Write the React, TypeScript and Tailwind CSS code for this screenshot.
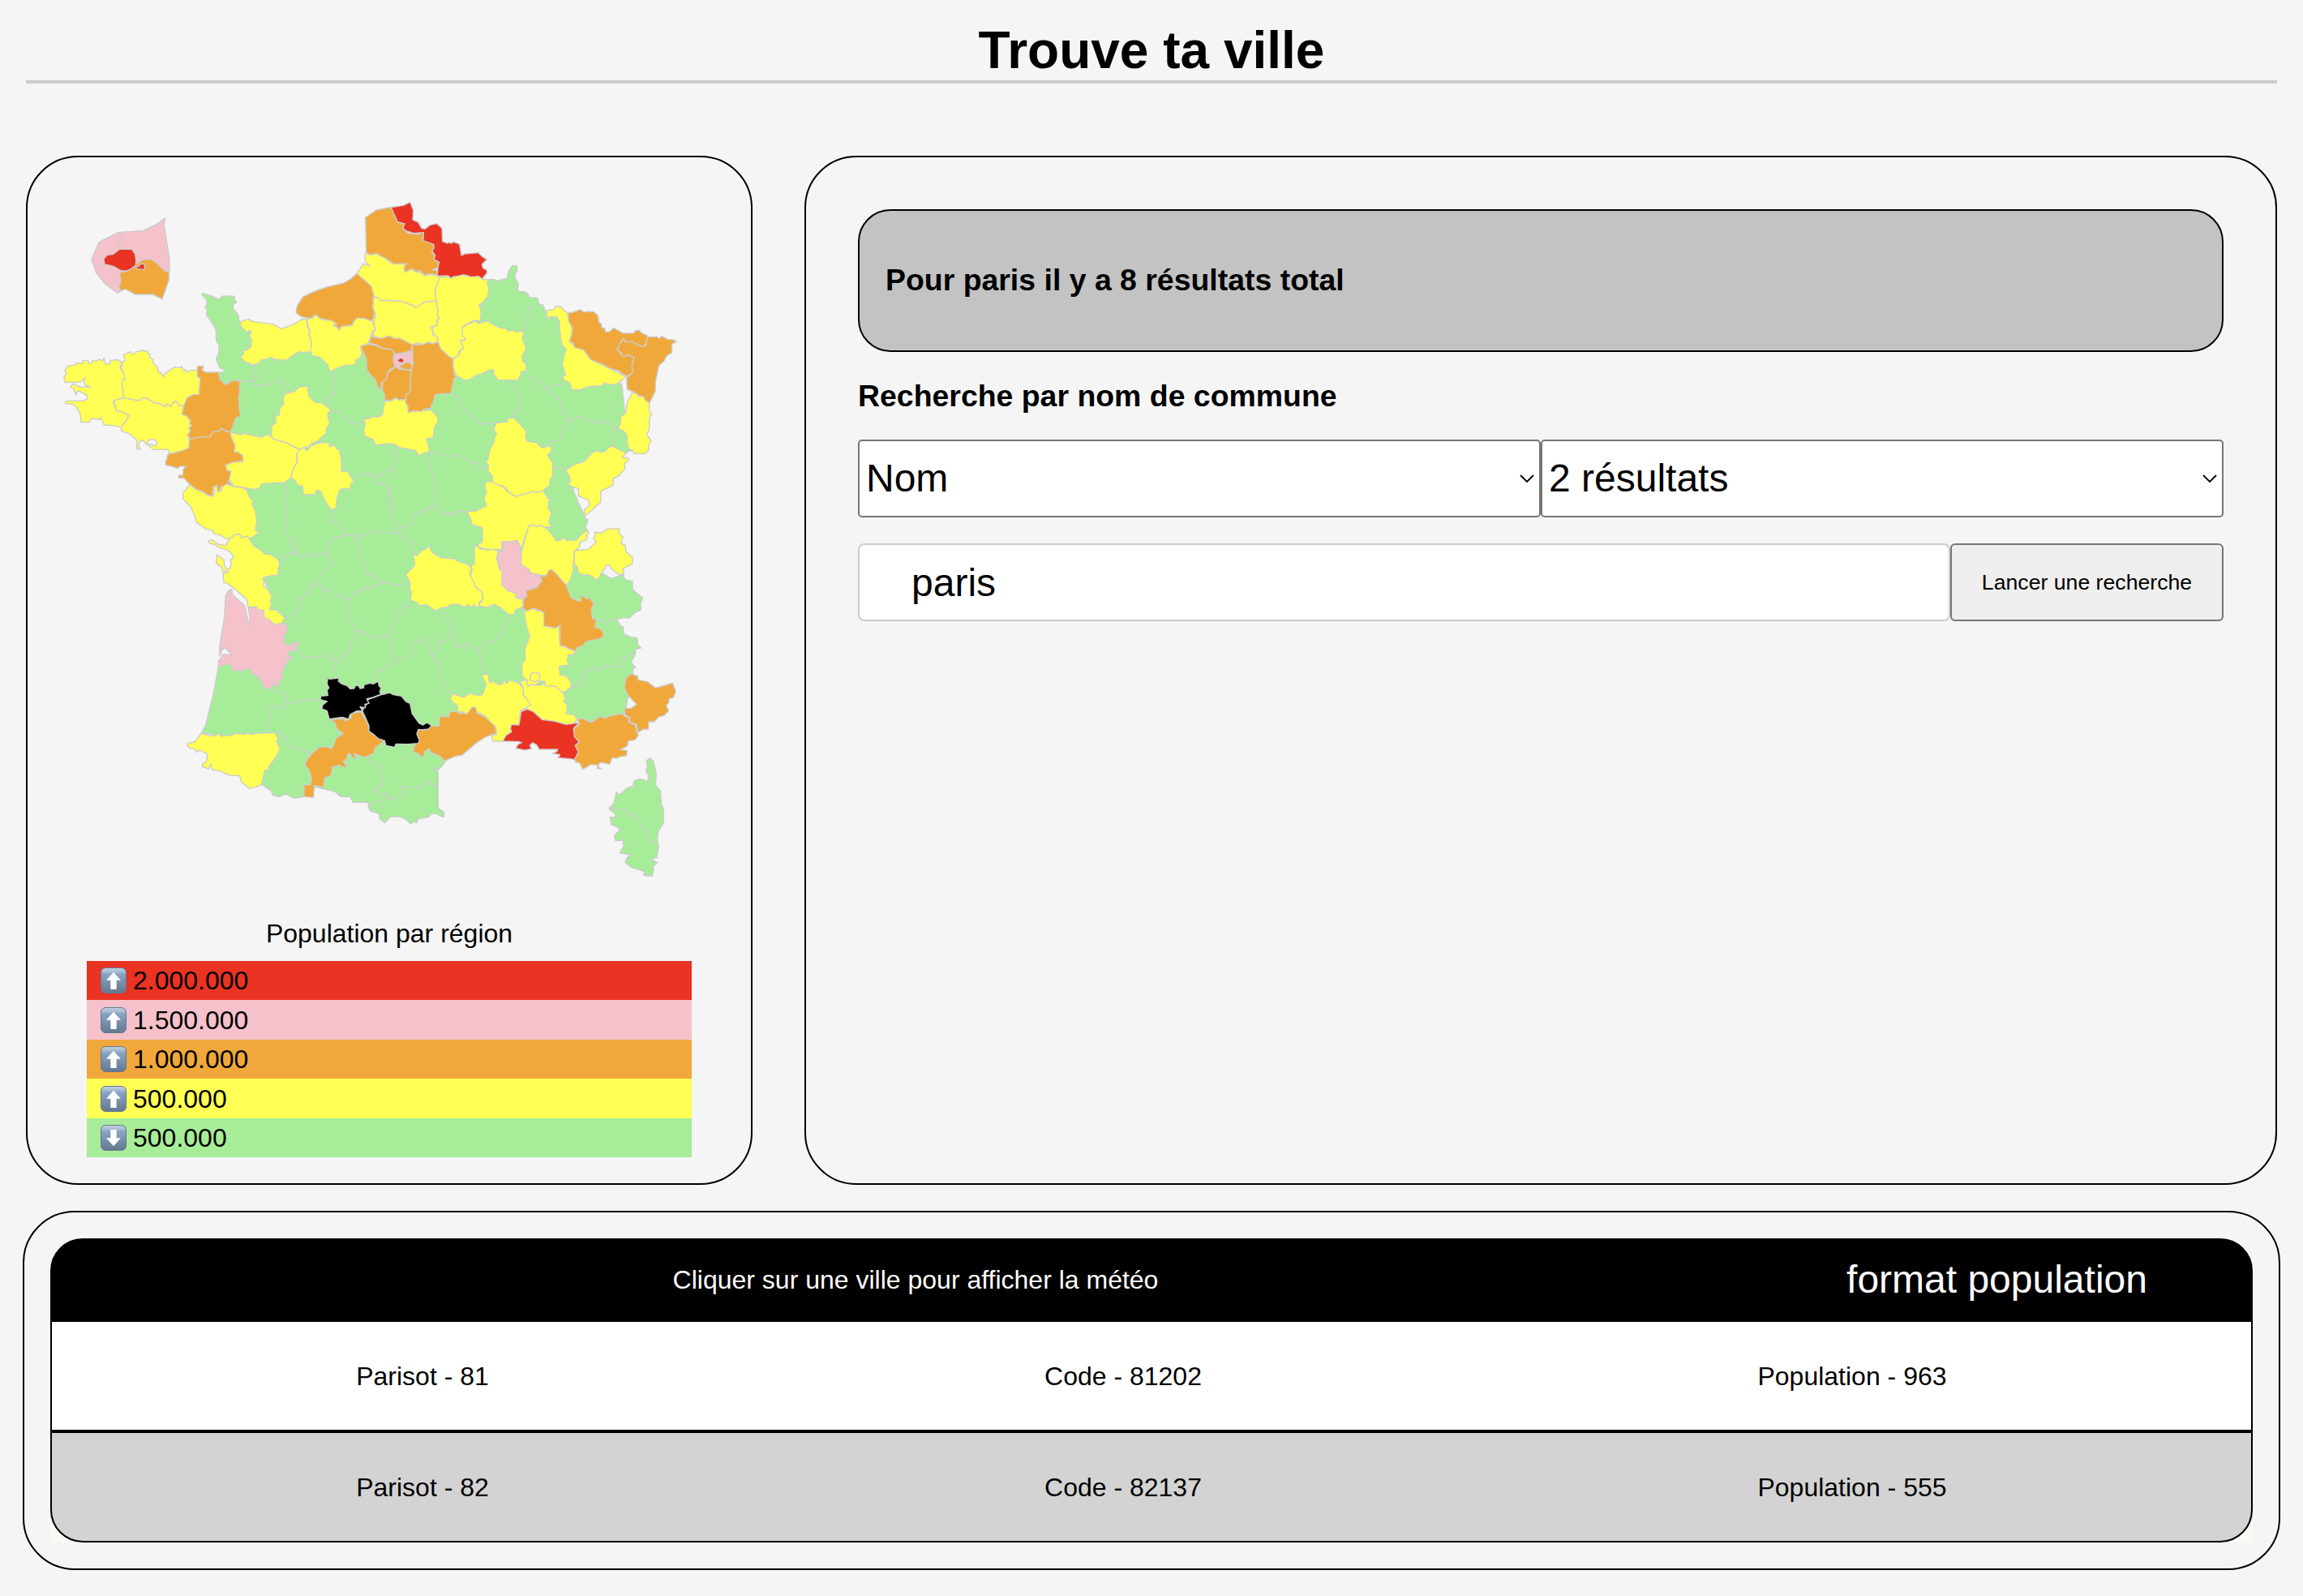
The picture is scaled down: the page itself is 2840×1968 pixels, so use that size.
import React from "react";

type Tone = "red" | "pink" | "orange" | "yellow" | "black";
type Sheet = "nw" | "ne" | "sw" | "se" | "s" | "corse";

const FILLS: Record<Tone, string> = {
  red: "#ea3323",
  pink: "#f5c2cb",
  orange: "#f1a83b",
  yellow: "#ffff54",
  black: "#000000",
};

// Origin of every map sheet inside the shared viewBox.
const ORIGIN: Record<Sheet, [number, number]> = {
  nw: [0, 0],
  ne: [1080, 0],
  sw: [0, 1140],
  se: [1080, 1140],
  s: [540, 1680],
  corse: [1500, 1680],
};

const move = (sheet: Sheet) => `translate(${ORIGIN[sheet][0]} ${ORIGIN[sheet][1]})`;

const place = (sheet: Sheet, points: string) =>
  points
    .split(" ")
    .map((p) => {
      const [x, y] = p.split(",").map(Number);
      return `${x + ORIGIN[sheet][0]},${y + ORIGIN[sheet][1]}`;
    })
    .join(" ");

const mainland = [
  place("nw", "640,760 628,717 648,716 650,708 632,700 620,668 630,642 630,618 620,600 619,560 609,540 596,522 584,505 585,482 579,478 585,465 584,448 568,433 569,425 608,437 628,448 645,435 688,436 688,448 696,460 686,462 681,478 703,508 703,526 715,535 850,600 1000,600 1200,640"),
  place("ne", "300,700 440,640 500,500 530,450 545,374 567,373 578,380 617,368 620,347 635,323 653,324 653,345 646,348 645,370 657,387 655,417 685,421 695,430 697,440 728,442 733,465 748,467 757,490 765,521 777,512 800,512 830,540 840,620 880,740 1040,760 1055,900 1083,1007 1065,1009 1055,1018 1000,1020 900,1080 860,1150"),
  place("se", "880,60 903,107 903,115 916,123 905,150 915,163 890,180 870,260 1000,340 1047,325 1047,335 1058,346 1080,350 1080,380 1105,402 1118,412 1110,432 1110,457 1090,465 1067,487 1045,485 1023,492 1033,512 1045,520 1048,545 1072,557 1097,560 1100,585 1111,597 1092,602 1090,620 1075,650 1092,670 1082,672 1082,690 1070,750 1050,840 960,870 700,850 520,850 380,1000 388,1018 365,1045 355,1048 342,1045 350,1038 361,1055 361,1190 382,1203 382,1222 366,1218 357,1210 338,1210 325,1222 285,1230 283,1243 270,1240 260,1248 240,1230 215,1220 185,1222 165,1243 145,1230 143,1210 110,1200 103,1185 103,1168 47,1168 35,1147 0,1147"),
  place("sw", "1078,1145 1062,1130 1017,1118 980,1110 970,1147 945,1147 910,1152 895,1147 880,1137 850,1147 830,1142 823,1125 788,1102 760,1000 600,915 565,912 580,885 610,765 628,668 700,600 820,500 820,400 760,250 700,50 640,0"),
].join(" ");

const departments: [Sheet, Tone, string][] = [
  ["nw", "yellow", "62,708 70,694 85,692 97,691 103,682 125,684 127,674 145,674 150,684 160,683 162,673 177,675 187,669 200,675 205,663 209,684 217,687 227,685 228,673 255,671 271,679 264,702 278,722 283,743 272,745 272,775 277,790 275,812 242,822 239,829 250,858 277,865 293,871 295,882 284,900 269,920 235,914 205,912 192,882 190,893 160,888 150,902 120,902 117,872 105,850 93,836 60,833 64,824 130,822 142,817 142,802 110,785 99,801 95,780 80,771 90,760 115,771 154,772 134,763 130,748 136,737 118,753 60,755 57,735 66,723 60,710"],
  ["nw", "yellow", "277,653 303,641 308,650 320,646 325,640 338,641 340,636 366,639 368,648 374,650 373,662 386,669 387,684 402,697 405,714 418,720 425,734 430,722 466,698 489,700 492,694 498,712 505,706 512,717 522,710 550,709 551,735 561,738 556,799 535,800 513,812 502,841 482,841 475,827 465,825 450,844 436,834 432,846 412,832 390,831 376,821 360,812 342,815 335,824 322,820 275,812 277,790 272,775 272,745 283,743 278,722 268,702 274,690 270,680 283,673"],
  ["nw", "yellow", "242,822 275,812 322,820 335,824 342,815 360,812 376,821 390,831 412,832 432,846 436,834 450,844 465,825 475,827 482,841 498,841 493,873 510,878 524,895 521,908 531,914 519,922 525,935 515,948 521,966 519,998 487,1010 457,1017 444,1015 444,1003 387,1003 365,983 378,984 397,990 402,980 395,968 375,964 361,983 348,968 335,975 333,990 340,1003 325,1000 327,970 300,945 270,935 269,918 284,900 297,878 277,865 250,858"],
  ["nw", "orange", "550,695 574,694 567,707 580,717 627,717 634,744 654,762 667,757 683,746 708,752 705,775 708,790 703,805 705,850 710,880 693,885 673,938 660,935 637,925 632,934 607,938 597,956 550,958 523,966 515,948 525,935 519,922 531,914 521,908 524,895 510,878 493,873 502,835 513,812 535,800 556,799 561,738 551,735"],
  ["nw", "orange", "521,966 550,958 597,956 607,938 632,934 637,925 660,937 673,938 676,958 690,988 687,1012 708,1014 720,1030 718,1047 688,1049 655,1060 660,1080 675,1083 672,1110 664,1122 683,1137 657,1133 637,1142 632,1158 623,1160 623,1135 610,1140 606,1176 588,1172 575,1160 545,1150 520,1130 500,1108 480,1108 482,1098 497,1098 498,1075 510,1065 485,1065 478,1073 455,1065 433,1060 432,1047 437,1040 440,1022 455,1017 487,1010 519,998"],
  ["nw", "yellow", "709,530 740,520 755,529 830,539 860,556 903,541 935,522 953,519 958,550 965,567 963,580 973,605 972,641 940,643 925,641 903,655 880,672 853,671 832,669 825,661 800,670 786,672 778,684 755,690 725,678 709,660 722,650 718,638 730,637 748,622 751,597 742,580 750,567 742,562 735,570 712,550"],
  ["nw", "orange", "935,512 915,496 920,470 941,438 985,417 1030,402 1092,387 1120,370 1140,352 1163,365 1196,398 1203,437 1198,450 1204,465 1197,470 1206,500 1198,528 1165,517 1140,517 1128,530 1124,543 1080,548 1082,562 1070,558 1065,546 1052,544 1065,540 1040,525 1005,518 988,504 970,517"],
  ["nw", "yellow", "955,519 975,518 988,504 1005,518 1020,524 1045,525 1065,537 1052,545 1066,549 1078,562 1080,549 1124,543 1128,530 1140,517 1165,517 1198,528 1202,540 1210,562 1198,565 1183,610 1155,620 1158,655 1151,665 1137,672 1134,690 1097,692 1065,703 1040,716 1032,690 1005,662 975,655 969,640 973,605 963,580 967,563 960,550"],
  ["ne", "yellow", "92,275 110,283 132,278 165,295 180,308 195,316 240,315 235,330 240,345 262,335 280,347 290,345 312,360 330,355 365,362 367,380 353,400 350,413 354,453 310,458 280,477 240,460 215,452 180,455 145,452 125,437 113,398 60,352 85,315 108,325 90,303"],
  ["ne", "orange", "92,145 132,117 185,107 197,125 210,160 237,168 230,185 250,203 290,207 300,197 312,205 303,218 305,230 343,240 350,258 337,270 352,295 347,303 365,310 360,330 340,338 358,340 358,357 325,352 312,360 290,338 287,347 262,335 238,347 235,330 245,315 210,316 195,316 178,302 160,293 132,277 110,283 95,273"],
  ["ne", "red", "187,107 232,100 257,88 269,118 267,153 287,162 300,185 312,187 330,173 357,167 375,185 377,233 395,240 403,236 408,240 418,235 440,243 447,285 460,279 510,275 525,290 541,300 523,317 527,332 542,340 540,352 523,372 510,362 490,367 470,360 455,357 432,367 420,362 408,370 398,360 358,361 360,330 365,310 345,300 350,285 338,268 345,258 345,245 305,230 307,200 270,203 245,195 230,185 237,168 210,160"],
  ["ne", "yellow", "125,437 137,440 145,452 180,450 190,455 215,452 240,460 280,477 310,458 354,453 360,485 358,510 367,517 356,525 358,543 333,550 345,570 340,582 345,572 360,590 357,603 340,612 325,606 302,615 290,608 265,615 220,592 200,592 180,583 150,592 122,583 118,572 130,562 122,530 131,505 120,480 122,450"],
  ["ne", "yellow", "367,367 398,362 408,370 430,362 455,357 480,365 510,362 523,372 547,377 542,390 549,405 545,435 525,460 512,467 520,490 518,527 495,525 455,545 450,575 463,587 463,597 445,600 455,628 437,640 437,655 417,668 400,658 370,630 360,603 360,590 342,572 340,550 358,543 358,525 366,517 358,510 360,485 354,453 350,413 356,392"],
  ["ne", "yellow", "417,668 437,655 442,640 455,628 443,600 463,597 450,580 450,552 470,538 485,535 495,525 510,537 540,527 590,553 615,555 620,566 640,560 647,567 673,565 677,577 672,595 687,625 680,645 672,655 673,675 688,690 683,712 668,715 666,730 655,745 583,747 567,725 565,708 548,709 525,722 505,727 475,745 457,746 425,727 417,695"],
  ["ne", "yellow", "762,488 790,485 795,474 815,474 825,487 840,497 843,525 857,553 855,577 847,603 865,620 900,635 925,670 990,700 1055,733 1030,757 1003,764 975,757 965,768 945,768 915,771 885,783 855,780 848,757 825,745 820,732 832,728 820,690 827,655 835,633 823,622 815,600 810,550 810,530 800,512 777,512 765,520"],
  ["ne", "orange", "843,497 860,495 888,485 900,495 915,492 935,493 953,508 955,532 965,538 966,552 977,555 980,568 995,567 1010,553 1045,573 1085,573 1090,563 1105,562 1115,573 1135,582 1133,600 1128,615 1118,622 1100,617 1080,605 1055,605 1045,592 1035,610 1023,632 1045,658 1065,652 1087,663 1078,690 1082,715 1063,733 1040,722 1030,713 990,700 970,688 925,670 900,635 865,625 862,610 847,603 857,570 857,553 843,525"],
  ["ne", "orange", "1135,585 1160,587 1168,585 1178,593 1188,584 1210,595 1235,598 1242,605 1226,612 1225,645 1205,657 1197,675 1177,692 1172,720 1165,750 1165,785 1142,832 1125,818 1120,807 1105,805 1085,790 1060,780 1058,737 1070,728 1082,715 1078,690 1087,663 1065,652 1045,660 1038,645 1023,632 1035,610 1047,592 1055,605 1080,605 1100,617 1118,622 1130,618"],
  ["ne", "yellow", "1080,790 1092,795 1105,807 1120,807 1125,818 1142,832 1142,860 1151,873 1143,885 1142,930 1133,947 1150,973 1140,985 1140,1005 1128,1018 1087,1018 1083,1007 1068,1003 1060,980 1060,950 1048,935 1027,925 1035,905 1037,880 1055,868 1060,830"],
  ["ne", "yellow", "833,1080 860,1060 900,1047 935,1012 950,1008 960,1013 980,1010 990,995 1005,990 1055,1015 1042,1035 1060,1032 1068,1040 1050,1057 1053,1072 1030,1100 1010,1110 1007,1135 963,1157 963,1198 903,1250 903,1225 920,1210 918,1190 880,1175 880,1147 842,1135 850,1120 848,1105"],
  ["ne", "yellow", "575,905 617,900 620,887 640,885 665,910 688,938 683,948 690,972 725,977 745,997 763,993 770,987 782,998 780,1010 765,1025 785,1050 785,1100 775,1115 773,1135 752,1153 735,1162 710,1160 650,1177 625,1165 615,1150 600,1137 580,1135 560,1120 563,1103 545,1083 547,1060 535,1048 545,1040 548,1020 553,1000 568,975 568,960 578,947 567,930"],
  ["ne", "yellow", "163,825 190,822 203,812 215,820 240,818 243,832 250,845 250,862 275,862 300,855 310,860 335,855 350,872 360,885 360,900 345,925 345,940 343,960 317,962 330,1010 310,1015 300,1020 290,1028 280,1010 268,1005 215,995 205,987 180,980 130,987 120,965 90,955 85,930 92,910 85,890 110,888 115,880 140,883 155,873"],
  ["ne", "orange", "265,615 302,615 325,606 340,612 360,605 370,630 400,658 417,668 415,685 420,725 432,733 420,738 408,795 370,797 350,800 343,825 333,850 310,853 300,862 270,860 250,866 250,845 240,825 243,800 258,785 258,735 262,710 268,690"],
  ["ne", "orange", "118,578 122,588 150,592 180,583 200,592 220,592 265,615 262,637 235,645 200,650 190,635 160,630 135,617 105,608"],
  ["ne", "orange", "73,622 105,612 140,622 160,630 190,633 198,645 195,665 203,695 185,705 173,720 172,745 150,757 150,780 135,770 130,745 115,732 98,710 95,665"],
  ["ne", "orange", "175,720 203,697 218,705 262,712 258,735 258,785 243,800 240,818 215,818 203,810 190,820 163,820 163,800 155,785 155,755 170,740"],
  ["ne", "pink", "198,655 215,650 240,645 264,635 268,680 240,685 215,705 203,695 195,675"],
  ["ne", "orange", "220,690 240,683 250,678 265,690 262,708 240,708 222,700"],
  ["ne", "red", "207,673 225,663 235,672 232,680 222,682"],
  ["nw", "yellow", "876,795 905,790 930,770 957,770 963,805 985,828 1010,830 1030,845 1045,858 1033,868 1033,880 1040,910 1027,925 1027,942 997,970 970,982 962,993 957,1005 955,992 930,1003 880,978 828,965 823,940 827,912 842,905 838,880 853,875 855,850 870,835 868,810"],
  ["nw", "yellow", "673,940 715,948 722,942 752,950 790,957 800,950 820,950 828,963 880,978 928,1005 918,1020 918,1050 903,1080 897,1107 865,1130 860,1125 787,1130 780,1147 757,1150 715,1143 685,1140 668,1112 675,1083 660,1080 655,1060 688,1049 720,1047 718,1025 700,1012 687,1012 690,988 676,958"],
  ["nw", "yellow", "928,1003 945,995 957,1007 968,990 1000,978 1037,977 1040,993 1058,985 1065,1000 1075,1003 1083,1040 1083,1083 1108,1085 1113,1097 1130,1120 1118,1132 1115,1150 1095,1147 1078,1150 1068,1180 1062,1218 1048,1228 1028,1203 1013,1175 1010,1160 993,1153 985,1168 942,1170 940,1140 918,1133 915,1120 897,1107 905,1075 920,1050 918,1020"],
  ["nw", "yellow", "522,1133 545,1150 575,1162 588,1172 610,1176 615,1155 608,1145 622,1138 625,1158 637,1157 642,1142 657,1130 685,1140 715,1143 733,1152 740,1175 757,1195 752,1205 765,1230 770,1270 765,1300 778,1312 745,1332 730,1325 714,1332 708,1318 690,1318 675,1330 660,1335 632,1318 613,1315 605,1300 583,1298 547,1272 537,1240 525,1215 497,1185 497,1163"],
  ["sw", "yellow", "672,190 690,178 708,177 714,190 733,183 742,192 757,218 785,235 800,250 820,250 850,270 855,288 850,305 848,330 830,328 793,337 797,370 812,380 825,405 820,425 825,438 817,455 845,457 873,487 863,507 835,510 810,490 797,487 795,457 770,457 770,445 738,445 733,418 690,380 660,358 648,355 645,320 640,298 620,283 622,252 648,270 650,290 657,303 650,318 665,318 663,303 673,300 676,283 672,272 685,262 672,242 657,232 640,230 610,213 595,210 590,202 605,197 625,213 655,218"],
  ["sw", "pink", "678,380 680,400 725,440 742,515 745,490 738,447 770,447 772,457 795,458 797,487 812,490 835,510 863,507 883,513 880,540 870,548 873,565 867,575 880,585 905,585 910,573 927,577 917,590 917,603 890,610 885,625 903,632 885,645 868,675 863,690 867,708 853,715 855,735 838,738 830,730 820,747 797,745 787,720 770,700 750,690 745,677 733,673 710,684 695,677 680,682 675,660 660,655 628,668 628,645 637,635 643,620 675,622 665,608 650,595 637,613 632,628 633,585 650,485 655,402 668,382"],
  ["sw", "yellow", "565,912 595,922 620,920 630,912 638,925 645,920 670,922 690,914 710,912 715,917 740,912 745,917 770,912 800,912 838,910 850,935 843,943 857,970 835,1010 815,1035 815,1047 800,1050 788,1102 765,1112 742,1117 712,1092 707,1070 670,1068 640,1055 603,1045 600,1025 592,1045 568,1035 570,1025 583,1018 588,990 560,975 545,982 540,970 523,968 513,958 515,950 540,945"],
  ["sw", "orange", "1045,862 1090,858 1098,868 1120,855 1118,840 1155,833 1175,865 1187,895 1190,910 1225,930 1240,942 1220,957 1205,970 1205,985 1190,992 1170,1002 1130,988 1140,1007 1125,1003 1115,988 1105,990 1105,1008 1090,1015 1103,1035 1095,1040 1075,1030 1050,1038 1045,1068 1020,1078 1017,1112 983,1105 980,1150 945,1147 945,1103 967,1105 973,1083 965,1050 948,1030 955,1010 975,987 1003,963 1030,963 1047,970 1055,955 1065,930 1090,913 1065,895 1060,875"],
  ["s", "orange", "905,310 940,312 943,295 965,290 980,300 1000,297 1015,285 1032,272 1042,280 1045,298 1080,315 1112,345 1115,372 1075,387 1040,410 990,453 965,457 925,475 910,460 890,448 875,445 868,430 850,440 850,455 838,460 830,448 808,442 812,420 830,400 822,375 828,358 850,360 878,345 905,345"],
  ["s", "black", "620,290 632,270 640,262 635,250 662,240 690,230 700,228 720,222 735,230 765,235 782,255 797,262 805,300 830,335 845,342 860,333 877,345 865,357 840,360 828,358 822,375 832,400 827,410 790,413 745,412 740,424 708,418 703,400 680,393 660,375 645,365 645,345 630,310"],
  ["s", "black", "492,168 500,172 535,168 532,180 545,190 565,197 575,208 590,207 595,197 605,195 612,207 625,205 627,193 650,187 660,190 680,180 682,197 690,205 685,220 690,228 660,240 637,245 645,262 630,265 632,278 612,275 622,290 600,290 575,303 570,320 545,313 498,320 490,290 470,282 473,268 490,255 465,248 467,235 493,233 490,212 497,205 490,190"],
  ["se", "yellow", "695,147 710,140 725,147 740,143 765,157 780,175 798,200 815,198 825,187 835,200 872,198 888,180 908,163 918,170 910,180 913,190 908,197 885,207 885,222 865,240 863,262 860,310 850,345 835,365 795,320 778,307 765,327 740,330 703,320 695,305 668,290 668,245"],
  ["se", "yellow", "1030,155 985,157 965,172 940,168 943,180 935,195 947,203 930,220 915,232 875,235 865,240 865,290 875,295 880,320 900,327 915,325 935,335 943,345 953,343 970,310 980,303 980,292 995,290 1000,303 1033,327 1048,320 1045,305 1080,285 1080,262 1055,240 1053,217 1038,210 1045,187 1030,172"],
  ["se", "yellow", "495,217 510,222 515,230 545,235 555,230 580,237 603,235 602,243 580,255 580,270 587,300 598,310 597,362 620,385 650,395 650,412 672,415 675,445 650,455 640,473 620,472 597,452 570,435 545,447 512,442 517,430 528,415 523,390 497,370 480,330 487,305 480,293 495,287"],
  ["se", "yellow", "268,250 283,255 300,235 315,232 322,222 333,222 330,232 345,248 370,262 418,268 425,265 430,275 450,280 472,288 485,303 478,325 497,360 497,370 523,390 528,415 512,430 512,445 497,445 495,438 480,446 470,437 460,447 437,435 405,437 395,447 375,447 350,460 320,438 290,440 285,430 258,420 262,390 255,380 258,355 240,327 275,290"],
  ["se", "yellow", "537,-20 560,-18 575,-10 600,0 625,25 650,37 710,18 728,22 750,15 765,42 783,48 768,55 770,70 768,80 780,97 770,130 783,150 750,150 740,143 725,147 710,140 695,147 668,232 655,200 615,205 597,203 597,232 550,232 530,230 510,222 510,213 525,205 525,152 485,140 482,120 467,92 500,90 540,70 530,45 540,20 533,5"],
  ["se", "pink", "597,203 615,205 625,202 635,208 643,200 655,200 665,232 668,290 695,305 703,320 730,325 742,348 730,370 710,377 685,385 695,403 672,415 648,412 650,395 620,385 597,362 598,345 600,330 595,310 587,305 585,285 578,267 583,240 603,235"],
  ["se", "yellow", "680,460 715,450 727,460 745,457 752,470 752,515 795,523 808,513 812,590 825,590 843,600 872,610 860,622 843,622 838,640 845,660 808,665 810,680 812,697 835,700 850,720 853,742 840,750 828,762 810,755 795,740 755,737 755,720 738,720 720,735 710,735 692,738 685,715 672,700 670,660 682,640 682,600 700,555 687,515 682,490"],
  ["se", "yellow", "663,720 690,715 692,740 705,732 738,735 755,727 757,737 795,740 825,765 833,785 825,795 838,805 838,820 835,840 865,845 875,862 860,878 835,880 790,868 745,862 712,832 685,823 702,805 677,770 675,745"],
  ["se", "yellow", "703,695 715,686 735,692 738,700 733,717 718,722 700,715"],
  ["corse", "yellow", "117,152 128,158 130,185 145,180 165,193 180,190 180,175 190,180 193,190 205,175 240,188 255,205 255,230 283,265 278,272 245,290 240,342 213,342 208,358 212,370 180,402 143,402 140,382 157,375 155,350 110,305 85,295 78,275 65,278 50,298 42,302 35,292 15,295 12,270 0,262 -15,245 -3,225 35,240 60,222 70,230 100,232 110,218 118,190 103,162"],
  ["se", "orange", "735,325 747,332 762,330 770,310 780,307 795,320 835,365 853,412 883,425 890,420 887,405 895,405 910,415 922,412 937,435 927,455 932,490 943,487 945,500 940,520 960,525 973,540 972,557 945,567 920,570 905,577 895,590 875,595 872,608 845,600 830,590 812,588 812,513 795,523 752,515 752,465 715,450 690,460 675,450 677,418 690,405 685,385 725,375 745,348"],
  ["se", "orange", "1075,693 1088,697 1100,703 1100,715 1135,722 1165,745 1200,735 1228,727 1240,757 1232,780 1215,785 1215,797 1205,810 1213,830 1195,848 1180,850 1160,870 1140,870 1138,898 1120,897 1100,910 1095,880 1068,870 1070,855 1053,845 1050,820 1075,820 1095,805 1065,775 1050,745 1055,710"],
  ["se", "orange", "875,862 893,857 927,873 960,850 977,857 1000,848 1040,840 1055,852 1068,852 1065,870 1090,882 1095,905 1102,920 1088,938 1065,940 1060,960 1035,973 1060,977 1058,995 1030,1000 1025,1005 1005,1003 995,1028 965,1020 955,1025 955,1038 965,1045 948,1043 953,1030 925,1028 910,1038 895,1045 885,1023 868,1018 865,1003 880,985 865,960 883,947 868,935 862,915 865,895 885,877"],
  ["se", "red", "690,823 712,832 745,862 790,868 835,880 883,873 862,895 865,925 883,945 868,958 880,982 865,1010 850,1007 805,1003 812,992 785,987 800,980 803,972 735,972 725,955 710,948 700,957 707,970 680,975 648,968 657,953 670,948 660,943 600,942 612,920 633,907 628,895 633,880 660,882 668,833"],
];

// Limits shared by two departments of the lowest tier.
const limits: [Sheet, string][] = [
  ["nw", "650,760 683,746 735,750 755,750 765,735 767,705 755,690"],
  ["nw", "750,750 762,768 778,764 805,768 818,757 845,755 850,743 865,745 872,768 885,788"],
  ["nw", "1040,716 1055,730 1062,760 1060,795 1032,808 1037,820 1030,835"],
  ["nw", "1045,860 1080,865 1100,890 1130,907 1165,898"],
  ["ne", "50,1105 75,1095 100,1090 135,1105 160,1088 187,1083 190,1060 207,1038 190,1010 215,995"],
  ["ne", "125,1100 135,1128 172,1130 183,1165 180,1185 188,1215"],
  ["sw", "865,-12 878,5 885,50 877,110 885,180 893,197 905,190 903,225 918,240 870,260 857,288"],
  ["sw", "900,240 940,260 960,262 968,245 980,257 1000,252 1025,247"],
  ["sw", "1047,87 1047,120 1080,145 1100,180 1055,190 1028,215 1030,243 1035,265 1048,285 1025,305 1000,345 985,360 965,385 925,425 920,455 905,475 873,487"],
  ["se", "20,180 50,180 65,187 55,215 78,245 82,290 95,300 100,320 140,340 145,360 105,375 60,390 30,418 -10,405 -30,385 -55,382 -60,390 -70,365 -92,360"],
  ["se", "60,187 120,165 125,170 215,172 235,195 262,215 268,250"],
  ["se", "215,165 235,145 270,140 275,105 300,90 335,75 355,75 375,102 400,95 425,105 440,90 467,95"],
  ["se", "172,0 185,45 180,70 195,100 200,160 192,168"],
  ["ne", "330,1015 322,1035 335,1080 353,1120 355,1215"],
  ["ne", "330,1012 355,1015 370,1025 410,1028 430,1022 460,1040 485,1055 497,1045 520,1070 545,1065"],
  ["ne", "415,797 445,820 450,852 480,865 505,908 545,908 575,905"],
  ["ne", "633,747 632,765 660,800 665,850 638,868 650,885"],
  ["ne", "688,727 740,757 765,780 815,825 812,862 830,870 835,892 850,895 830,930 820,935 818,967 775,972 768,988"],
  ["ne", "765,780 780,770 800,767 825,760"],
  ["ne", "850,895 870,885 890,878 900,897 935,895 955,908 975,895 1025,925 1010,932 1010,970 1005,990"],
  ["ne", "785,1068 805,1077 835,1075"],
  ["ne", "728,470 720,477 697,475 690,500 697,515 690,550 675,560"],
  ["se", "145,360 165,353 215,365 240,355"],
  ["se", "25,420 35,455 25,470 30,500 50,510 57,540 55,560 40,580 30,610 5,625 -5,645 -30,635 -40,640 -60,625 -125,632 -140,632 -160,605"],
  ["se", "57,540 75,533 120,562 160,550 180,552"],
  ["se", "258,440 250,445 232,435 225,460 200,495 185,530 180,552 190,585 195,640"],
  ["se", "-5,645 -25,660 -15,700"],
  ["se", "140,725 135,685 185,660 205,635 250,635 270,590 300,562 330,595 345,635 365,658 378,730 408,765"],
  ["se", "365,460 385,470 410,515 405,530 415,550 385,570 370,570 345,635"],
  ["se", "415,550 432,592 455,590 470,578 480,590 512,605 520,650 537,685 527,700"],
  ["se", "512,605 550,573 575,570 582,550 600,540 605,510 618,490 620,475"],
  ["sw", "838,738 842,762 885,768 878,803 915,797 955,787 1005,792"],
  ["sw", "878,790 872,823 858,808 820,820 820,855 807,905"],
  ["sw", "838,910 858,905 862,925 883,935 890,965 915,967 945,978 975,987"],
  ["se", "945,495 972,495 980,508 990,508 997,495 1023,492"],
  ["se", "855,745 860,738 890,735 885,715 900,715 900,690 935,668 958,688 963,665 1035,665 1045,640 1092,610"],
  ["s", "645,462 650,475 690,498 697,565 667,575 690,600 715,597 735,617"],
  ["s", "645,642 690,620 735,617 770,597 765,572 845,572 865,552 902,572"],
];

const corsica =
  "723,464 737,475 748,520 745,565 763,585 767,635 775,655 775,705 755,735 752,768 757,790 750,833 735,835 738,845 752,850 737,865 738,880 732,900 712,900 700,895 707,885 655,868 633,850 640,832 655,823 612,815 628,790 625,780 627,768 597,770 593,752 613,730 605,720 582,710 577,683 597,683 597,673 573,652 592,630 600,590 612,600 640,575 662,568 665,550 680,543 700,543 712,552 718,545 718,525 710,515 715,495 712,475";

function FranceMap() {
  return (
    <svg viewBox="0 0 2400 2640" className="block h-[880px] w-[800px]" stroke="#cccccc" strokeWidth="4.2" strokeLinejoin="round">
      <polygon points={mainland} fill="#a7ed99" />
      <polygon points={corsica} transform={move("corse")} fill="#a7ed99" />
      {limits.map(([sheet, points], i) => (
        <polyline key={i} points={points} transform={move(sheet)} fill="none" />
      ))}
      <polyline points="573,647 590,650 625,655 635,652 637,667 650,672 660,670 668,685 675,685 695,710 695,727 712,732 720,775 740,773 752,765" transform={move("corse")} fill="none" />
      {departments.map(([sheet, tone, points], i) => (
        <polygon key={i} points={points} transform={move(sheet)} fill={FILLS[tone]} />
      ))}
      {/* Petite couronne */}
      <polygon points="257,200 187,235 172,268 159,300 176,350 210,391 256,424 267,415 300,340 300,220" fill={FILLS.pink} />
      <polygon points="257,200 350,193 400,170 431,147 427,176 437,235 447,297 447,347 340,320 262,262 257,243 268,238 274,222 262,207" fill={FILLS.pink} />
      <polygon points="322,318 350,300 378,298 402,315 430,343 445,347 445,376 420,446 385,429 320,429 283,409 267,416 260,402 267,380 263,348 290,343" fill={FILLS.orange} />
      <polygon points="204,297 218,283 237,281 262,262 308,262 320,280 323,300 322,322 305,335 290,342 267,341 240,325 207,318" fill={FILLS.red} />
      <polygon points="318,328 335,324 337,317 356,317 354,338 330,335" fill={FILLS.red} />
    </svg>
  );
}

function ArrowKey({ down }: { down?: boolean }) {
  return (
    <svg viewBox="0 0 96 96" className="mr-2 block size-8">
      <defs>
        <linearGradient id="key" x1="0" y1="0" x2="0" y2="1">
          <stop offset="0" stopColor="#c3d2e2" />
          <stop offset="0.18" stopColor="#a3b7cf" />
          <stop offset="0.24" stopColor="#8aa4c3" />
          <stop offset="1" stopColor="#64788f" />
        </linearGradient>
      </defs>
      <rect x="1.5" y="1.5" width="93" height="93" rx="17" fill="url(#key)" stroke="#647890" strokeWidth="3" />
      <path d={down ? "M37 18H59V49H75L48 79L21 49H37Z" : "M37 81H59V47H75L48 17L21 47H37Z"} fill="#ffffff" />
    </svg>
  );
}

function Chevron() {
  return (
    <svg viewBox="0 0 18 10" className="mr-[6px] h-[10px] w-[18px]" fill="none" stroke="#000" strokeWidth="1.8">
      <path d="M1 1L9 9L17 1" />
    </svg>
  );
}

function SelectBox({ label }: { label: string }) {
  return (
    <button className="flex h-24 flex-1 items-center justify-between rounded-[5px] border-2 border-[#767676] bg-white pl-2 text-[48px] leading-none">
      <span>{label}</span>
      <Chevron />
    </button>
  );
}

const legend = [
  { label: "2.000.000", box: "h-12 bg-[#ea3323]" },
  { label: "1.500.000", box: "h-[49px] bg-[#f5c2cb]" },
  { label: "1.000.000", box: "h-12 bg-[#f1a83b]" },
  { label: "500.000", box: "h-[49px] bg-[#ffff54]" },
  { label: "500.000", box: "h-12 bg-[#a7ed99]", down: true },
];

const towns = [
  { name: "Parisot - 81", code: "Code - 81202", population: "Population - 963", row: "border-b-4 bg-white" },
  { name: "Parisot - 82", code: "Code - 82137", population: "Population - 555", row: "bg-[#d3d3d3]" },
];

export default function App() {
  return (
    <div className="h-[1968px] w-[2840px] overflow-hidden bg-[#f5f5f5] font-['Liberation_Sans',sans-serif] text-[32px] leading-none text-black">
      <header className="mx-8 border-b-4 border-[#cccccc] pt-[25px] text-center">
        <h1 className="text-[64px] leading-[74px] font-bold">Trouve ta ville</h1>
      </header>

      <main className="mx-8 mt-[89px] flex h-[1269px] gap-16">
        <section className="w-[896px] rounded-[64px] border-2 border-black pt-[26px]">
          <div className="pl-[26px]">
            <FranceMap />
          </div>
          <p className="mt-[35px] text-center">Population par région</p>
          <ul className="mt-[18px] ml-[73px] w-[746px]">
            {legend.map((item, i) => (
              <li key={i} className={"flex items-center pl-[17px] " + item.box}>
                <ArrowKey down={item.down} />
                {item.label}
              </li>
            ))}
          </ul>
        </section>

        <section className="flex-1 rounded-[64px] border-2 border-black p-16">
          <div className="flex h-44 items-center rounded-[40px] border-2 border-black bg-[#c3c3c3] px-8 text-[37.44px] font-bold">
            Pour paris il y a 8 résultats total
          </div>
          <h2 className="mt-[34px] text-[37.44px] leading-[40px] font-bold">Recherche par nom de commune</h2>
          <div className="mt-[34px] flex">
            <SelectBox label="Nom" />
            <SelectBox label="2 résultats" />
          </div>
          <div className="mt-8 flex h-24">
            <input defaultValue="paris" className="w-[1347px] rounded-lg border-2 border-[#cccccc] bg-white pl-[64px] text-[48px]" />
            <button className="flex-1 rounded-[6px] border-2 border-[#767676] bg-[#efefef] text-[26.67px]">Lancer une recherche</button>
          </div>
        </section>
      </main>

      <section className="mx-7 mt-8 h-[443px] rounded-[64px] border-2 border-black p-8">
        <div className="bg-[linear-gradient(to_bottom,#f5f5f5_50%,#faf9f5_50%)]">
          <div className="h-[375px] overflow-hidden rounded-[40px] border-2 border-black bg-black">
            <div className="flex h-[101px] items-center bg-black pb-1 text-center text-white">
              <span className="w-[2130px]">Cliquer sur une ville pour afficher la météo</span>
              <span className="w-[537px] text-[48px]">format population</span>
            </div>
            {towns.map((town) => (
              <div key={town.name} className={"box-content grid h-[133px] grid-cols-[914px_814px_984px] items-center border-black text-center " + town.row}>
                <span>{town.name}</span>
                <span>{town.code}</span>
                <span>{town.population}</span>
              </div>
            ))}
          </div>
        </div>
      </section>
    </div>
  );
}
